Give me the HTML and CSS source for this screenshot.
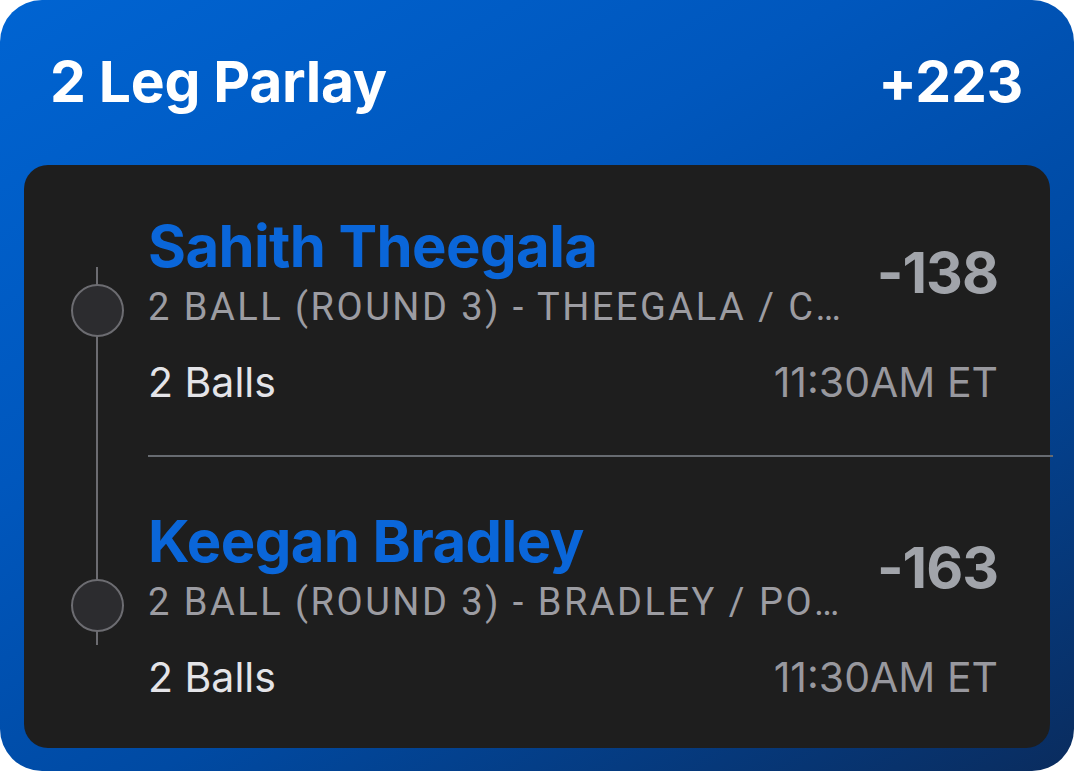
FILE: index.html
```html
<!DOCTYPE html>
<html lang="en">
<head>
<meta charset="utf-8">
<title>2 Leg Parlay</title>
<link rel="stylesheet" href="styles.css">
</head>
<body>
  <div class="parlay">
    <header class="parlay-head">
      <h1 class="parlay-title">2 Leg Parlay</h1>
      <span class="parlay-odds">+223</span>
    </header>

    <section class="legs">
      <div class="rail"></div>

      <div class="leg">
        <span class="dot"></span>
        <div class="leg-name">Sahith Theegala</div>
        <div class="leg-odds">-138</div>
        <div class="leg-market">2 BALL (ROUND 3) - THEEGALA / CONNERS</div>
        <div class="leg-type">2 Balls</div>
        <div class="leg-time">11:30AM ET</div>
      </div>

      <hr class="divider">

      <div class="leg">
        <span class="dot"></span>
        <div class="leg-name">Keegan Bradley</div>
        <div class="leg-odds">-163</div>
        <div class="leg-market">2 BALL (ROUND 3) - BRADLEY / POSTON</div>
        <div class="leg-type">2 Balls</div>
        <div class="leg-time">11:30AM ET</div>
      </div>
    </section>
  </div>
</body>
</html>
```

FILE: styles.css
```css
* {
  box-sizing: border-box;
}

html,
body {
  margin: 0;
  background: #ffffff;
}

body {
  font-family: Inter, "Noto Sans", "Liberation Sans", sans-serif;
}

.parlay {
  width: 1074px;
  height: 771px;
  border-radius: 42px;
  background:
    linear-gradient(150deg, #0064d2 0%, #0057bd 35%, #004aa3 62%, #0a2c5e 100%);
  display: flex;
  flex-direction: column;
  overflow: hidden;
}

/* header row */
.parlay-head {
  height: 165px;
  padding: 0 51px 0 50px;
  display: flex;
  align-items: center;
  justify-content: space-between;
  color: #ffffff;
}

.parlay-title,
.parlay-odds {
  margin: 0;
  font-size: 57px;
  font-weight: 700;
  letter-spacing: -0.3px;
  line-height: 60px;
  padding-bottom: 2px;
}

/* dark panel holding the legs */
.legs {
  position: relative;
  margin: 0 24px;
  height: 583px;
  background: #1e1e1e;
  border-radius: 24px;
  padding: 51px 52px 0 0;
}

.rail {
  position: absolute;
  left: 72px;
  top: 102px;
  width: 2px;
  height: 378px;
  background: #6c6c71;
}

.leg {
  display: grid;
  grid-template-columns: 124px 1fr auto;
  grid-template-rows: 69px 44px 77px;
}

.dot {
  grid-column: 1;
  grid-row: 2;
  align-self: center;
  justify-self: start;
  margin-left: 47px;
  margin-top: 6px;
  width: 53px;
  height: 53px;
  border-radius: 50%;
  background: #2c2c2f;
  border: 2.5px solid #6c6c71;
  position: relative;
  z-index: 1;
}

.leg-name {
  grid-column: 2;
  grid-row: 1;
  align-self: start;
  color: #0a66d9;
  font-size: 58px;
  font-weight: 700;
  letter-spacing: -0.6px;
  line-height: 60px;
  white-space: nowrap;
}

.leg-odds {
  grid-column: 3;
  grid-row: 1 / span 2;
  align-self: center;
  justify-self: end;
  color: #a1a4aa;
  font-size: 57px;
  font-weight: 700;
  letter-spacing: -1px;
  line-height: 60px;
  padding-left: 34px;
}

.leg-market {
  grid-column: 2;
  grid-row: 2;
  color: #9c9ca2;
  font-family: Roboto, "Liberation Sans", sans-serif;
  font-size: 38px;
  letter-spacing: 2.5px;
  line-height: 44px;
  white-space: nowrap;
  overflow: hidden;
  text-overflow: ellipsis;
  min-width: 0;
}

.leg-type {
  grid-column: 2;
  grid-row: 3;
  margin-top: 29px;
  color: #e4e4e8;
  font-size: 41px;
  line-height: 48px;
}

.leg-time {
  grid-column: 2 / span 2;
  grid-row: 3;
  margin-top: 29px;
  justify-self: end;
  color: #98989e;
  font-size: 41px;
  line-height: 48px;
}

.leg + .divider + .leg {
  margin-top: 54px;
}

.divider {
  margin: 49px -55px 0 124px;
  border: 0;
  height: 2px;
  background: #676b71;
}
```
